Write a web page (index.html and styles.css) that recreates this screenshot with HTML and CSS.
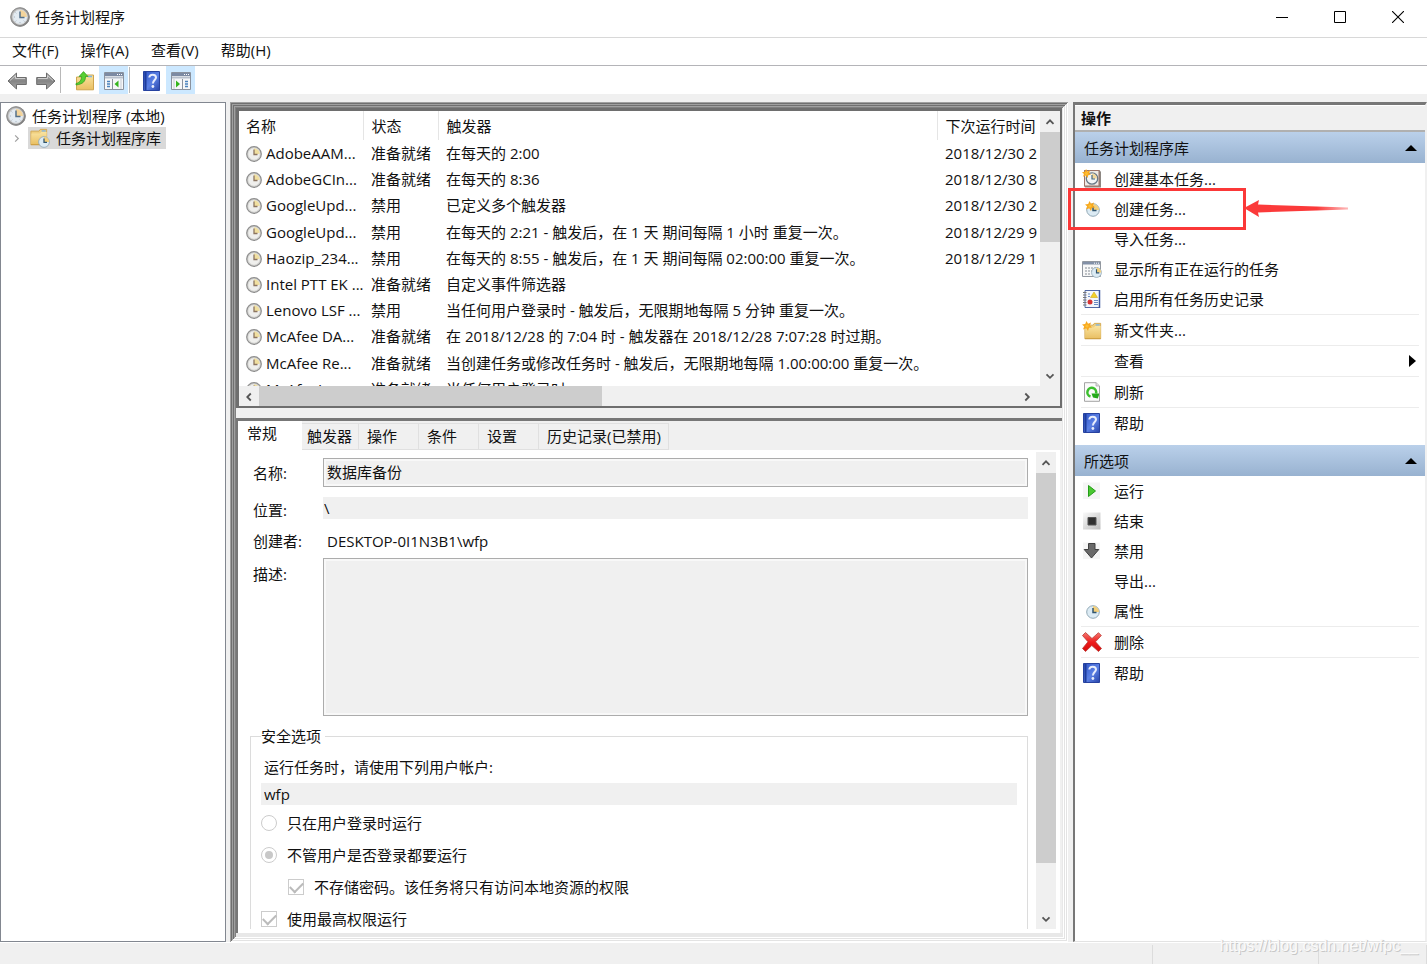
FILE: index.html
```html
<!DOCTYPE html>
<html lang="zh-CN">
<head>
<meta charset="utf-8">
<title>任务计划程序</title>
<link rel="stylesheet" href="styles.css">
</head>
<body>
<svg class="defs" width="0" height="0" aria-hidden="true">
  <defs>
    <linearGradient id="g-metal" x1="0" y1="0" x2="1" y2="1"><stop offset="0" stop-color="#c4c4c4"/><stop offset="1" stop-color="#6c6c6c"/></linearGradient>
    <linearGradient id="g-arrow" x1="0" y1="0" x2="0" y2="1"><stop offset="0" stop-color="#b5b5b5"/><stop offset=".5" stop-color="#858585"/><stop offset="1" stop-color="#a8a8a8"/></linearGradient>
    <linearGradient id="g-folder" x1="0" y1="0" x2="0" y2="1"><stop offset="0" stop-color="#f9e3a0"/><stop offset="1" stop-color="#e9bf62"/></linearGradient>
    <linearGradient id="g-help" x1="0" y1="0" x2="1" y2="1"><stop offset="0" stop-color="#2f55c8"/><stop offset=".55" stop-color="#5b80e4"/><stop offset="1" stop-color="#2743a8"/></linearGradient>
    <linearGradient id="g-red" x1="0" y1="0" x2="0" y2="1"><stop offset="0" stop-color="#f47a72"/><stop offset=".5" stop-color="#ee1c1c"/><stop offset="1" stop-color="#d60b0b"/></linearGradient>
    <linearGradient id="g-stop" x1="0" y1="0" x2="1" y2="1"><stop offset="0" stop-color="#fafafa"/><stop offset="1" stop-color="#bdbdbd"/></linearGradient>
    <linearGradient id="g-fade" x1="0" y1="0" x2="1" y2="0"><stop offset=".7" stop-color="#fb3a3a"/><stop offset="1" stop-color="#fb3a3a" stop-opacity=".35"/></linearGradient>
  </defs>
  <symbol id="clock" viewBox="0 0 20 20">
    <circle cx="10" cy="10" r="9.7" fill="url(#g-metal)"/>
    <circle cx="10" cy="10" r="9.2" fill="none" stroke="#8b8b8b"/>
    <circle cx="10" cy="10" r="7.4" fill="#e3ebf2" stroke="#d0d0d0"/>
    <path d="M10 10V3A7 7 0 0 1 17 10Z" fill="#f3d49b"/>
    <path d="M10 4.500V10.500H14.500" fill="none" stroke="#55718a" stroke-width="1.500"/>
    <path d="M3.800 10H5M10 15V16.200M5.500 5.500l.8.8M5.500 14.500l.8-.8M14.500 14.500l-.8-.8" stroke="#aab6c0"/>
  </symbol>
  <symbol id="clock-row" viewBox="0 0 16 16">
    <circle cx="8" cy="8" r="7.300" fill="#d4d4d2" stroke="#8e8e8e" stroke-width="1.200"/>
    <circle cx="8" cy="8" r="5.700" fill="#efefed"/>
    <path d="M8 8V2.300A5.700 5.700 0 0 1 13.700 8Z" fill="#f0dfa0"/>
    <path d="M8 3.500V8.500H11.500" fill="none" stroke="#8c7560" stroke-width="1.300"/>
  </symbol>
  <symbol id="clock-small" viewBox="0 0 14 14">
    <circle cx="7" cy="7" r="6.300" fill="#dcebf4" stroke="#92a9b6"/>
    <path d="M7 7V1A6 6 0 0 1 13 7Z" fill="#f3cf7b"/>
    <path d="M7 3V7.500H10.500" fill="none" stroke="#31566f" stroke-width="1.500"/>
  </symbol>
  <symbol id="star" viewBox="0 0 10 10">
    <path d="M4.500 0 6 2.700 9 1.500 8 4.500 10 6.500 7 6.800 6 10 4.200 7.300 1 8.500 2.200 5.500 0 3.500 3.200 3Z" fill="#f8a81e"/>
    <circle cx="5" cy="5" r="1.600" fill="#fdbf35"/>
  </symbol>
  <symbol id="back" viewBox="0 0 20 18">
    <path d="M1 9 9.500 1V5.500H19.300V12.500H9.500V17Z" fill="url(#g-arrow)" stroke="#6d6d6d"/>
    <path d="M3 8.500 8.500 3.500V6.500H18" fill="none" stroke="#cdcdcd"/>
  </symbol>
  <symbol id="forward" viewBox="0 0 20 18">
    <path d="M19 9 10.500 1V5.500H.7V12.500H10.500V17Z" fill="url(#g-arrow)" stroke="#6d6d6d"/>
    <path d="M2 6.500H11.500V3.500L17 8.500" fill="none" stroke="#cdcdcd"/>
  </symbol>
  <symbol id="folder" viewBox="0 0 20 20">
    <path d="M1 3.500H10L11.500 1.500H18.500V18.500H1Z" fill="#efcf7f" stroke="#d1a64d"/>
    <path d="M13 2.500H17.500V4H13Z" fill="#7fb6e6"/>
    <path d="M1.500 6H11L12.500 4.500H18.500V18.500H1.500Z" fill="url(#g-folder)"/>
    <path d="M1 18.500H18.500" stroke="#c99a3c"/>
  </symbol>
  <symbol id="folder-up" viewBox="0 0 20 20">
    <path d="M1.500 6H10L11.500 4H18.500V18.800H1.500Z" fill="url(#g-folder)" stroke="#cfa44e"/>
    <path d="M13 5.500H17" stroke="#7fb6e6" stroke-width="1.500"/>
    <path d="M1 12.500C5 11.500 6.500 9 6.500 5.500H4L8.500 .6 13 5.500H10.500C10.500 10.500 8 13 1 14Z" fill="#58cf33" stroke="#2c9a17" stroke-width=".7"/>
  </symbol>
  <symbol id="folder-clock" viewBox="0 0 20 20">
    <use href="#folder" width="18" height="18"/>
    <use href="#clock-small" x="8" y="8" width="12" height="12"/>
  </symbol>
  <symbol id="folder-new" viewBox="0 0 20 20">
    <use href="#folder" x="2" y="2" width="18" height="18"/>
    <use href="#star" x="0" y="1" width="10" height="10"/>
  </symbol>
  <symbol id="pane-left" viewBox="0 0 20 18">
    <path d="M.5.500H19.500V17.500H.5Z" fill="#f6f7f9" stroke="#8a929e"/>
    <path d="M1 1H19V4H1Z" fill="#7c8aa3"/><path d="M13 2.500H18" stroke="#fff" stroke-dasharray="1 1"/>
    <path d="M1 5.500H19" stroke="#b9c0cc" stroke-width="2"/>
    <path d="M3 9.500H6M3 12H6M3 14.500H6" stroke="#4a82bd" stroke-width="1.300"/>
    <path d="M8.500 7V17" stroke="#8a929e"/><path d="M14.500 8.500V15.500L10.500 12Z" fill="#35b51d"/>
    <path d="M17 7V17" stroke="#c5cbd4"/>
  </symbol>
  <symbol id="pane-right" viewBox="0 0 20 18">
    <path d="M.5.500H19.500V17.500H.5Z" fill="#f6f7f9" stroke="#8a929e"/>
    <path d="M1 1H19V4H1Z" fill="#7c8aa3"/><path d="M13 2.500H18" stroke="#fff" stroke-dasharray="1 1"/>
    <path d="M1 5.500H19" stroke="#b9c0cc" stroke-width="2"/>
    <path d="M14 9.500H17M14 12H17M14 14.500H17" stroke="#4a82bd" stroke-width="1.300"/>
    <path d="M11.500 7V17" stroke="#8a929e"/><path d="M5 8.500V15.500L9 12Z" fill="#35b51d"/>
    <path d="M3 7V17" stroke="#c5cbd4"/>
  </symbol>
  <symbol id="help" viewBox="0 0 18 20">
    <path d="M.5.500H16.500V19.500H.5Z" fill="url(#g-help)" stroke="#2742a0"/>
    <path d="M2.500 1V19" stroke="#1f3c9b" stroke-width="2"/>
    <path d="M6.300 6.500C6.500 2.700 13 2.700 13 6.500 13 9 9.900 9 9.900 12.500" fill="none" stroke="#e8edfb" stroke-width="2"/>
    <circle cx="9.900" cy="15.500" r="1.400" fill="#e8edfb"/>
  </symbol>
  <symbol id="task-basic" viewBox="0 0 20 20">
    <path d="M2 1H17.500L19 3V18.500H3L2 17Z" fill="#8d8782"/>
    <path d="M2.500 1.500H17V17H2.500Z" fill="#eeeae6" stroke="#9c7468"/>
    <circle cx="10" cy="9.500" r="5.700" fill="#f2f5f6" stroke="#697885" stroke-width="1.300"/>
    <path d="M10 9.500V4.500A5 5 0 0 1 15 9.500Z" fill="#f3d79c"/>
    <path d="M10 6V10H13" fill="none" stroke="#47687e" stroke-width="1.200"/>
    <use href="#star" x="0" y="0" width="9" height="9"/>
  </symbol>
  <symbol id="task-new" viewBox="0 0 20 20">
    <use href="#clock-small" x="4" y="4" width="14" height="14"/>
    <use href="#star" x="3" y="2" width="10" height="10"/>
  </symbol>
  <symbol id="running" viewBox="0 0 20 20">
    <path d="M.5 2.500H18.500V17.500H.5Z" fill="#f8f8f8" stroke="#9298a0"/>
    <path d="M1 3H18V5.500H1Z" fill="#8290a7"/><path d="M12 4.200H17" stroke="#fff" stroke-dasharray="1 1"/>
    <path d="M3 9H16M3 12H10M3 15H9" stroke="#838b94" stroke-width="1.200" stroke-dasharray="2 1"/>
    <use href="#clock-small" x="9" y="8" width="11" height="11"/>
  </symbol>
  <symbol id="history" viewBox="0 0 20 20">
    <path d="M3 1.500H17.500V18.500H3Z" fill="#f4f7fc" stroke="#5268a5"/>
    <path d="M17.500 1V19" stroke="#3b559e" stroke-width="1.500"/>
    <path d="M1 3.500H4.500M1 6H4.500M1 8.500H4.500M1 11H4.500M1 13.500H4.500M1 16H4.500" stroke="#777" stroke-width="1.200"/>
    <path d="M12 3 15.500 8.500H8.500Z" fill="#f3d229" stroke="#d1a818" stroke-width=".6"/>
    <circle cx="8" cy="13" r="2.500" fill="#d73535"/>
    <path d="M6 5H8M6 7.500H8M12 11.500H16M12 13.500H16M12 15.500H16" stroke="#6b8bc4"/>
  </symbol>
  <symbol id="refresh" viewBox="0 0 20 20">
    <path d="M2.500.7H14L17.500 4V19.300H2.500Z" fill="#fbfbfb" stroke="#a3a3a3"/>
    <path d="M14 .7V4H17.500" fill="#ddd" stroke="#a3a3a3" stroke-width=".7"/>
    <path d="M8.500 14.500A4.400 4.400 0 1 1 14 11.500" fill="none" stroke="#3bbf2d" stroke-width="2.500"/>
    <path d="M9.500 11.500H17V13L15.800 16.500 11 15.500Z" fill="#25a91a"/>
  </symbol>
  <symbol id="run" viewBox="0 0 20 20">
    <path d="M1 1.500H18V18H1Z" fill="#f5f5f5"/><path d="M6.500 4.500 13.500 10 6.500 15.500Z" fill="#4bc832" stroke="#249d18"/>
  </symbol>
  <symbol id="end" viewBox="0 0 20 20">
    <path d="M1 1.500H18.500V18.500H1Z" fill="url(#g-stop)"/><path d="M6 6.500H14V14H6Z" fill="#303030" stroke="#555"/>
  </symbol>
  <symbol id="disable" viewBox="0 0 20 20">
    <path d="M1 1.500H18V18H1Z" fill="#f5f5f5"/><path d="M6.500 2.500H13V8.500H16.800L9.500 17 2.200 8.500H6.500Z" fill="#696969" stroke="#404040"/>
  </symbol>
  <symbol id="props" viewBox="0 0 20 20"><use href="#clock-small" x="4" y="4" width="14" height="14"/></symbol>
  <symbol id="delete" viewBox="0 0 20 20">
    <path d="M3.500.500 10 6.500 16.500.700 19.300 3.500 13.500 9.800 19.500 16.500 16.500 19.500 9.800 13.500 3.500 19.500.5 16.500 6 9.800.5 3.500Z" fill="url(#g-red)" stroke="#b93a35" stroke-width=".8"/>
  </symbol>
  <symbol id="up" viewBox="0 0 10 10"><path d="M1.500 6.800 5 3.300 8.500 6.800" fill="none" stroke="#555" stroke-width="1.800"/></symbol>
  <symbol id="down" viewBox="0 0 10 10"><path d="M1.500 3.300 5 6.800 8.500 3.300" fill="none" stroke="#555" stroke-width="1.800"/></symbol>
  <symbol id="left" viewBox="0 0 10 10"><path d="M6.800 1.500 3.300 5 6.800 8.500" fill="none" stroke="#555" stroke-width="1.800"/></symbol>
  <symbol id="right" viewBox="0 0 10 10"><path d="M3.300 1.500 6.800 5 3.300 8.500" fill="none" stroke="#555" stroke-width="1.800"/></symbol>
</svg>

<div class="window">
  <header class="titlebar">
    <svg class="i20"><use href="#clock"/></svg>
    <h1 class="title">任务计划程序</h1>
    <button class="win-btn" aria-label="最小化"><svg width="12" height="12"><path d="M0 6.500H12" stroke="#000"/></svg></button>
    <button class="win-btn" aria-label="最大化"><svg width="12" height="12"><path d="M.5.500H11.500V11.500H.5Z" fill="none" stroke="#000"/></svg></button>
    <button class="win-btn" aria-label="关闭"><svg width="12" height="12"><path d="M0 0 12 12M12 0 0 12" stroke="#000" stroke-width="1.100"/></svg></button>
  </header>
  <nav class="menubar">
    <button>文件(F)</button><button>操作(A)</button><button>查看(V)</button><button>帮助(H)</button>
  </nav>
  <div class="toolbar">
    <button class="tool" aria-label="后退"><svg class="arrow"><use href="#back"/></svg></button>
    <button class="tool" aria-label="前进"><svg class="arrow"><use href="#forward"/></svg></button>
    <span class="tool-sep"></span>
    <button class="tool push" aria-label="向上"><svg class="i20"><use href="#folder-up"/></svg></button>
    <button class="tool on" aria-label="显示控制台树"><svg class="arrow"><use href="#pane-left"/></svg></button>
    <span class="tool-sep tight"></span>
    <button class="tool push-sm" aria-label="帮助"><svg class="i20"><use href="#help"/></svg></button>
    <button class="tool on" aria-label="显示操作窗格"><svg class="arrow"><use href="#pane-right"/></svg></button>
  </div>

  <main class="work">
    <aside class="tree">
      <ul>
        <li class="node"><svg class="i20"><use href="#clock"/></svg><span>任务计划程序 (本地)</span></li>
        <li class="node child">
          <svg class="twist" viewBox="0 0 10 10"><path d="M3.500 1.500 7 5 3.500 8.500" fill="none" stroke="#a0a0a0" stroke-width="1.300"/></svg>
          <span class="picked"><svg class="i20"><use href="#folder-clock"/></svg><span>任务计划程序库</span></span>
        </li>
      </ul>
    </aside>

    <section class="center">
      <div class="list-pane">
        <div class="list-row">
          <div class="list-view">
            <table class="tasks">
              <colgroup><col class="c-name"><col class="c-state"><col><col class="c-next"></colgroup>
              <thead><tr><th>名称</th><th>状态</th><th>触发器</th><th>下次运行时间</th></tr></thead>
              <tbody>
                <tr><td><svg class="i16"><use href="#clock-row"/></svg>AdobeAAM...</td><td>准备就绪</td><td>在每天的 2:00</td><td>2018/12/30 2</td></tr>
                <tr><td><svg class="i16"><use href="#clock-row"/></svg>AdobeGCIn...</td><td>准备就绪</td><td>在每天的 8:36</td><td>2018/12/30 8</td></tr>
                <tr><td><svg class="i16"><use href="#clock-row"/></svg>GoogleUpd...</td><td>禁用</td><td>已定义多个触发器</td><td>2018/12/30 2</td></tr>
                <tr><td><svg class="i16"><use href="#clock-row"/></svg>GoogleUpd...</td><td>禁用</td><td>在每天的 2:21 - 触发后，在 1 天 期间每隔 1 小时 重复一次。</td><td>2018/12/29 9</td></tr>
                <tr><td><svg class="i16"><use href="#clock-row"/></svg>Haozip_234...</td><td>禁用</td><td>在每天的 8:55 - 触发后，在 1 天 期间每隔 02:00:00 重复一次。</td><td>2018/12/29 1</td></tr>
                <tr><td><svg class="i16"><use href="#clock-row"/></svg>Intel PTT EK ...</td><td>准备就绪</td><td>自定义事件筛选器</td><td></td></tr>
                <tr><td><svg class="i16"><use href="#clock-row"/></svg>Lenovo LSF ...</td><td>禁用</td><td>当任何用户登录时 - 触发后，无限期地每隔 5 分钟 重复一次。</td><td></td></tr>
                <tr><td><svg class="i16"><use href="#clock-row"/></svg>McAfee DA...</td><td>准备就绪</td><td>在 2018/12/28 的 7:04 时 - 触发器在 2018/12/28 7:07:28 时过期。</td><td></td></tr>
                <tr><td><svg class="i16"><use href="#clock-row"/></svg>McAfee Re...</td><td>准备就绪</td><td>当创建任务或修改任务时 - 触发后，无限期地每隔 1.00:00:00 重复一次。</td><td></td></tr>
                <tr><td><svg class="i16"><use href="#clock-row"/></svg>McAfeeLo...</td><td>准备就绪</td><td>当任何用户登录时</td><td></td></tr>
              </tbody>
            </table>
          </div>
          <div class="vbar">
            <button aria-label="向上滚动"><svg><use href="#up"/></svg></button>
            <span class="thumb list-thumb"></span><span class="fill"></span>
            <button aria-label="向下滚动"><svg><use href="#down"/></svg></button>
          </div>
        </div>
        <div class="hbar">
          <button aria-label="向左滚动"><svg><use href="#left"/></svg></button>
          <span class="thumb"></span><span class="fill"></span>
          <button aria-label="向右滚动"><svg><use href="#right"/></svg></button>
        </div>
      </div>

      <div class="detail-pane">
        <div class="tabs" role="tablist">
          <button role="tab" class="tab active" aria-selected="true">常规</button>
          <button role="tab" class="tab snug">触发器</button>
          <button role="tab" class="tab">操作</button>
          <button role="tab" class="tab">条件</button>
          <button role="tab" class="tab">设置</button>
          <button role="tab" class="tab long">历史记录(已禁用)</button>
        </div>
        <div class="page">
          <form class="form">
            <div class="row name-row"><label for="f-name">名称:</label><input id="f-name" class="boxed" value="数据库备份" readonly></div>
            <div class="row loc-row"><label for="f-loc">位置:</label><input id="f-loc" class="plain" value="\" readonly></div>
            <div class="row by-row"><label for="f-by">创建者:</label><output id="f-by">DESKTOP-0I1N3B1\wfp</output></div>
            <div class="row desc-row"><label for="f-desc">描述:</label><textarea id="f-desc" class="boxed" readonly></textarea></div>
            <fieldset class="security">
              <legend>安全选项</legend>
              <label class="account-label" for="f-user">运行任务时，请使用下列用户帐户:</label>
              <input id="f-user" class="plain account" value="wfp" readonly>
              <div class="options">
                <label><input type="radio" name="when" disabled>只在用户登录时运行</label>
                <label><input type="radio" name="when" checked disabled>不管用户是否登录都要运行</label>
                <label class="indent"><input type="checkbox" checked disabled>不存储密码。该任务将只有访问本地资源的权限</label>
                <label><input type="checkbox" checked disabled>使用最高权限运行</label>
              </div>
            </fieldset>
          </form>
          <div class="vbar">
            <button type="button" aria-label="向上滚动"><svg><use href="#up"/></svg></button>
            <span class="thumb page-thumb"></span><span class="fill"></span>
            <button type="button" aria-label="向下滚动"><svg><use href="#down"/></svg></button>
          </div>
        </div>
      </div>
    </section>

    <aside class="actions">
      <h2 class="actions-title">操作</h2>
      <h3 class="group">任务计划程序库<svg width="12" height="6"><path d="M0 6 6 0 12 6Z"/></svg></h3>
      <ul class="cmds first">
        <li><button><svg class="i20"><use href="#task-basic"/></svg>创建基本任务...</button></li>
        <li class="marked"><button><svg class="i20"><use href="#task-new"/></svg>创建任务...</button>
          <span class="mark"></span>
          <svg class="pointer" viewBox="0 0 104 18"><path d="M0 8 15 0 14 4.500 104 7.500V9.500L14 12.500 15 17Z" fill="url(#g-fade)"/></svg>
        </li>
        <li><button><span class="i20"></span>导入任务...</button></li>
        <li><button><svg class="i20"><use href="#running"/></svg>显示所有正在运行的任务</button></li>
        <li><button><svg class="i20"><use href="#history"/></svg>启用所有任务历史记录</button></li>
        <li class="ruled"><button><svg class="i20"><use href="#folder-new"/></svg>新文件夹...</button></li>
        <li class="ruled"><button><span class="i20"></span>查看<svg class="more" width="7" height="12"><path d="M0 0 7 6 0 12Z"/></svg></button></li>
        <li class="ruled"><button><svg class="i20"><use href="#refresh"/></svg>刷新</button></li>
        <li class="ruled"><button><svg class="i20"><use href="#help"/></svg>帮助</button></li>
      </ul>
      <h3 class="group">所选项<svg width="12" height="6"><path d="M0 6 6 0 12 6Z"/></svg></h3>
      <ul class="cmds">
        <li><button><svg class="i20"><use href="#run"/></svg>运行</button></li>
        <li><button><svg class="i20"><use href="#end"/></svg>结束</button></li>
        <li><button><svg class="i20"><use href="#disable"/></svg>禁用</button></li>
        <li><button><span class="i20"></span>导出...</button></li>
        <li><button><svg class="i20"><use href="#props"/></svg>属性</button></li>
        <li class="ruled"><button><svg class="i20"><use href="#delete"/></svg>删除</button></li>
        <li class="ruled"><button><svg class="i20"><use href="#help"/></svg>帮助</button></li>
      </ul>
    </aside>
  </main>
  <footer class="status"><span></span><span></span><span></span><p class="watermark">https://blog.csdn.net/wfpc__</p></footer>
</div>
</body>
</html>
```
FILE: styles.css
```css
* { box-sizing: border-box; }
body, h1, h2, h3, ul, p { margin: 0; padding: 0; }
ul { list-style: none; }
body, button, input, textarea {
  font: 15px/22px "Open Sans", "Noto Sans CJK SC", sans-serif;
  color: #111;
}
button { border: 0; padding: 0; background: none; }
svg { display: block; flex: none; }
.defs { position: absolute; }
.i20 { width: 20px; height: 20px; flex: none; }
.i16 { width: 16px; height: 16px; }

.window { display: flex; flex-direction: column; height: 100vh; background: #f0f0f0; overflow: hidden; }
.titlebar { display: flex; align-items: center; height: 37px; padding: 0 0 3px 10px; background: #fff; flex: none; }
.title { flex: 1; margin-left: 5px; font-size: 15px; font-weight: 400; }
.win-btn { width: 58px; height: 34px; display: grid; place-items: center; }
.menubar { display: flex; gap: 22px; height: 29px; padding: 0 0 3px 12px; background: #fff; border: solid #d8d8d8; border-width: 1px 0; border-bottom-color: #b4b4b8; flex: none; }
.toolbar { display: flex; align-items: center; height: 28px; padding-left: 2px; background: #fff; flex: none; }
.tool { width: 29px; height: 28px; padding-top: 2px; display: grid; place-items: center; }
.tool .arrow { width: 20px; height: 18px; }
.tool.on { background: #cce8ff; }
.tool.push { margin-left: 9px; }
.tool.push-sm { margin-left: 7px; }
.tool-sep { width: 1px; height: 26px; background: #b8b8b8; }
.tool-sep.tight { margin-left: 1px; }

.work { flex: 1; min-height: 0; display: flex; margin-top: 8px; }
.tree { width: 226px; flex: none; padding: 2px 5px; background: #fff; border: 1px solid #828790; }
.node { display: flex; align-items: center; height: 22px; gap: 6px; }
.node.child { gap: 7px; padding-left: 6px; }
.twist { width: 9px; height: 9px; }
.picked { display: flex; align-items: center; gap: 6px; height: 22px; padding: 0 5px 0 2px; background: #d9d9d9; }

.center {
  flex: 1; min-width: 0; display: flex; flex-direction: column;
  margin: 0 5px 0 4px; padding: 6px 6px 9px;
  box-shadow:
    inset 1px 1px #a0a0a0, inset -1px -1px #fff,
    inset 2px 2px #707070, inset -2px -2px #e3e3e3,
    inset 3px 3px #a0a0a0, inset -3px -3px #fff,
    inset 4px 4px #707070, inset -4px -4px #e3e3e3,
    inset 5px 5px #a0a0a0, inset -5px -5px #fff,
    inset 6px 6px #808080, inset -6px -9px #e8e8e8;
}
.list-pane { flex: none; display: flex; flex-direction: column; border: 2px solid #6e6e6e; border-left-width: 3px; border-top-width: 3px; background: #fff; }
.list-row { display: flex; height: 275px; }
.list-view { flex: 1; min-width: 0; overflow: hidden; }
.tasks { width: 100%; height: 291px; table-layout: fixed; border-collapse: collapse; }
.c-name { width: 124px; }
.c-state { width: 75px; }
.c-next { width: 103px; }
.tasks th, .tasks td { padding: 0 0 0 8px; text-align: left; font-weight: 400; white-space: nowrap; overflow: hidden; }
.tasks th:first-child, .tasks td:first-child { padding-left: 7px; }
.tasks th { height: 29px; border-right: 1px solid #e5e5e5; }
.tasks th:last-child { border-right: 0; }
.tasks td .i16 { display: inline-block; vertical-align: -3px; margin-right: 4px; }

.vbar { width: 20px; flex: none; display: flex; flex-direction: column; background: #f0f0f0; }
.vbar button, .hbar button { width: 20px; height: 21px; flex: none; display: grid; place-items: center; }
.vbar button svg, .hbar button svg { width: 10px; height: 10px; }
.thumb { background: #cdcdcd; }
.fill { flex: 1; }
.list-thumb { height: 40%; }
.page-thumb { height: 390px; }
.hbar { display: flex; height: 20px; background: #f0f0f0; padding-right: 23px; }
.hbar .thumb { width: 43%; }

.detail-pane { flex: 1; min-height: 0; display: flex; flex-direction: column; margin-top: 10px; border: solid #777; border-width: 3px 0 0 2px; padding-right: 2px; }
.tabs { display: flex; align-items: flex-end; height: 29px; flex: none; }
.tab { width: 60px; height: 27px; padding: 0 0 2px 8px; text-align: left; border: 1px solid #e0e0e0; border-left: 0; white-space: nowrap; }
.tab.active { width: 64px; height: 29px; padding: 0 0 5px 9px; background: #fff; border: 0; }
.tab.snug { width: 57px; padding-left: 5px; }
.tab.long { width: 130px; }
.page { flex: 1; min-height: 0; display: flex; background: #fff; padding: 2px 4px 4px 12px; }
.form { flex: 1; min-width: 0; overflow: hidden; padding-top: 6px; margin-right: 8px; }
.row { display: flex; }
.row label { width: 73px; flex: none; padding-left: 3px; }
.row .boxed, .row .plain { flex: 1; min-width: 0; }
.boxed { border: 1px solid #acacac; background: #f0f0f0; box-shadow: inset 0 0 0 2px #f8f8f8; border-radius: 0; padding: 0 3px; margin: 0; outline: 0; }
.plain { border: 0; background: #f0f0f0; height: 22px; padding: 0 1px; }
.name-row { height: 29px; align-items: center; }
.name-row .boxed { height: 29px; padding-bottom: 2px; }
.loc-row { height: 22px; margin-top: 10px; }
.loc-row label { padding-top: 2px; }
.by-row { height: 24px; margin-top: 10px; align-items: center; }
.by-row output { padding-left: 4px; }
.desc-row { margin-top: 5px; }
.desc-row label { padding-top: 5px; }
.desc-row textarea { height: 158px; resize: none; }
.security { min-width: 0; height: 240px; margin: 9px 0 0; padding: 9px 10px 0; border: 1px solid #dcdcdc; }
.security legend { padding: 0 4px 0 0; }
.account-label { display: block; padding-left: 3px; }
.account { display: block; width: 100%; margin-top: 5px; padding: 0 0 1px 3px; }
.options { display: flex; flex-direction: column; gap: 10px; margin-top: 7px; }
.options label { display: flex; align-items: center; gap: 10px; height: 22px; }
.options .indent { padding-left: 27px; }
.options input { appearance: none; width: 16px; height: 16px; margin: 0; border: 1px solid #ccc; background: #fff; flex: none; display: grid; place-items: center; }
.options input[type="radio"] { border-radius: 50%; }
.options input[type="radio"]:checked::after { content: ""; width: 8px; height: 8px; border-radius: 50%; background: #c8c8c8; }
.options input[type="checkbox"]:checked::after { content: ""; width: 11px; height: 6px; border: solid #bbb; border-width: 0 0 2px 2px; rotate: -45deg; margin-bottom: 3px; }

.actions { width: 354px; flex: none; background: #fff; border: solid #777; border-width: 3px 2px 1px 2px; border-right-color: #f0f0f0; border-bottom-color: #e3e3e3; }
.actions-title { height: 27px; padding: 1px 6px; font-size: 15px; font-weight: 700; background: #f0f0f0; border-top: 1px solid #fff; border-bottom: 2px solid #b0b0b0; }
.group { display: flex; align-items: center; justify-content: space-between; height: 31px; padding: 0 8px 0 9px; font-size: 15px; font-weight: 400; background: linear-gradient(#bad0ea, #98b2d0); }
.cmds.first { padding: 1px 0 7px; }
.cmds li { margin: 0 6px; }
.cmds button { display: flex; align-items: center; width: 100%; height: 30px; padding-left: 1px; gap: 12px; text-align: left; }
.cmds .ruled { border-top: 1px solid #ececec; }
.more { margin-left: auto; margin-right: 3px; }
.marked { position: relative; }
.mark { position: absolute; left: -13px; top: -6px; width: 178px; height: 42px; border: 3px solid #fb3838; }
.pointer { position: absolute; left: 163px; top: 6px; width: 104px; height: 18px; }

.status { position: relative; display: flex; justify-content: flex-end; height: 22px; flex: none; border-top: 1px solid #fff; padding-top: 2px; }
.status span { border-right: 1px solid #dcdcdc; }
.status span:nth-child(2) { width: 166px; }
.status span:nth-child(3) { width: 108px; }
.watermark { position: absolute; right: 9px; top: -8px; font: 16px/22px "Liberation Sans", sans-serif; color: #fafafa; text-shadow: 1px 1px #c8c8c8; }
```
